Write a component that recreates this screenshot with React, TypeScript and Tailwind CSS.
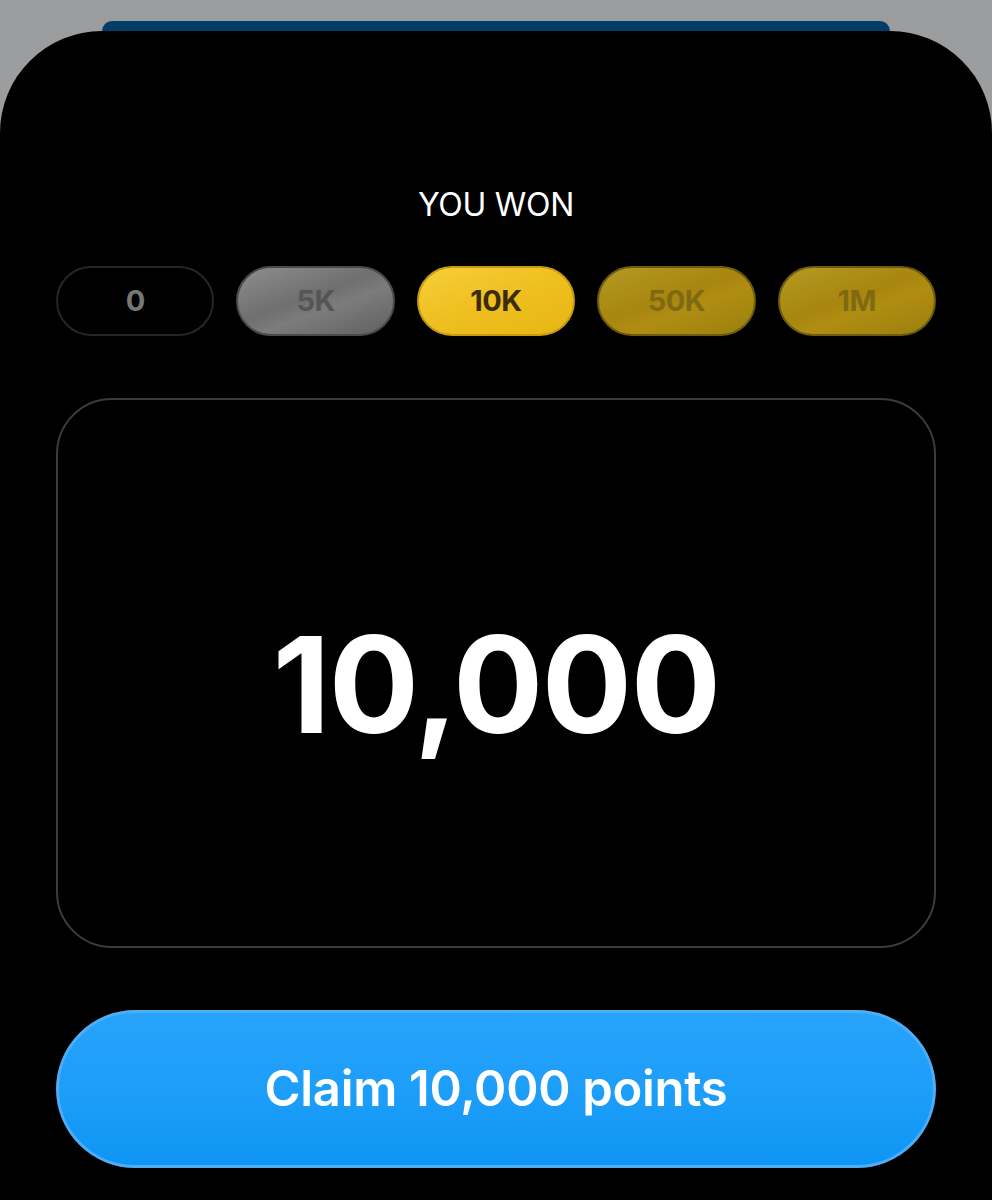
import React from 'react';

const tiers = [
  {
    label: '0',
    className:
      'bg-black border-[#262626] text-[#777777]',
  },
  {
    label: '5K',
    className:
      'bg-[linear-gradient(160deg,#8e8e8e_0%,#6f6f6f_45%,#7c7c7c_60%,#5f5f5f_100%)] border-[#4a4a4a] text-[#555555]',
  },
  {
    label: '10K',
    className:
      'bg-[linear-gradient(160deg,#f6cf3a_0%,#eebf1f_50%,#e8b615_100%)] border-[#c89a10] text-[#3b2c06]',
  },
  {
    label: '50K',
    className:
      'bg-[linear-gradient(160deg,#b39a23_0%,#a8860f_45%,#b08d12_60%,#9a800f_100%)] border-[#6e5c0c] text-[#7f6a12]',
  },
  {
    label: '1M',
    className:
      'bg-[linear-gradient(160deg,#b39a23_0%,#a8860f_45%,#b08d12_60%,#9a800f_100%)] border-[#6e5c0c] text-[#7f6a12]',
  },
];

const App = () => {
  return (
    <div
      className="w-[992px] h-[1200px] overflow-hidden flex flex-col bg-[linear-gradient(180deg,#9b9c9e_0%,#a4a4a4_100%)]"
      style={{ fontFamily: 'Inter, "Noto Sans", sans-serif' }}
    >
      {/* sheet peeking out behind */}
      <div className="mt-[21px] mx-[102px] h-[10px] shrink-0 rounded-t-[30px] bg-[#043e68]" />

      <div className="flex-1 flex flex-col bg-black rounded-t-[102px] px-[56px]">
        <div className="pt-[155px] text-center text-white text-[32px] leading-[38px] tracking-[-0.3px]">
          YOU WON
        </div>

        <div className="mt-[42px] flex gap-[22px]">
          {tiers.map((tier) => (
            <div
              key={tier.label}
              className={`flex-1 h-[70px] rounded-full border-2 flex items-center justify-center text-[29px] font-bold tracking-[-0.5px] ${tier.className}`}
            >
              {tier.label}
            </div>
          ))}
        </div>

        <div className="mt-[62px] h-[550px] rounded-[56px] border-2 border-[#3c3c3c] flex items-center justify-center pt-[22px]">
          <span className="text-white font-bold text-[134px] leading-none tracking-[-1.5px]">
            10,000
          </span>
        </div>

        <button className="mt-[62px] h-[158px] rounded-full border-[3px] border-[#4eaef5] bg-[linear-gradient(180deg,#27a3fb_0%,#1d9ef9_50%,#0f95f4_100%)] text-white text-[49px] font-semibold tracking-[-0.3px]">
          Claim 10,000 points
        </button>
      </div>
    </div>
  );
};

export default App;
